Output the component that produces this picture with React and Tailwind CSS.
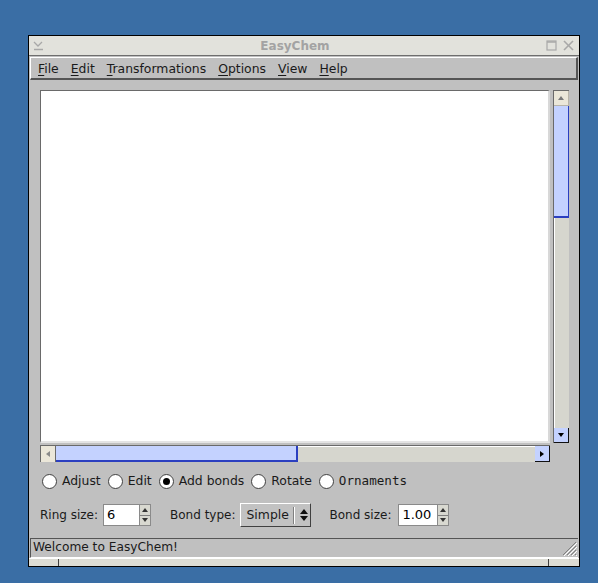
import React from "react";

const sans = { fontFamily: '"DejaVu Sans", "Liberation Sans", sans-serif' };

function Arrow({ dir, color = "#000" }) {
  const pts = {
    up: "1,5 4,1 7,5",
    down: "1,1 4,5 7,1",
    left: "5,1 1,4 5,7",
    right: "1,1 5,4 1,7",
  }[dir];
  const w = dir === "up" || dir === "down" ? 8 : 6;
  const h = dir === "up" || dir === "down" ? 6 : 8;
  return (
    <svg width={w} height={h} viewBox={`0 0 ${w} ${h}`}>
      <polygon points={pts} fill={color} />
    </svg>
  );
}

function Radio({ label, checked, mono }) {
  return (
    <div className="flex items-center gap-[5px]">
      <div className="w-[15px] h-[15px] rounded-full border border-[#404040] bg-white flex items-center justify-center">
        {checked && <div className="w-[7px] h-[7px] rounded-full bg-black" />}
      </div>
      <span
        className="text-[12.4px] text-[#1a1a1a]"
        style={mono ? { fontFamily: '"DejaVu Sans Mono", monospace', fontSize: "12.6px" } : undefined}
      >
        {label}
      </span>
    </div>
  );
}

function SpinBox({ value, width }) {
  return (
    <div className="flex h-[22px] border border-[#8a8a8a] bg-white">
      <div className={`${width} pl-[3px] flex items-center text-[13px] text-black`}>{value}</div>
      <div className="w-[11px] bg-[#c0c0c0] flex flex-col border-l border-[#8a8a8a]">
        <div className="flex-1 flex items-center justify-center border-b border-[#808080] bg-[#d8d8d0]">
          <svg width="6" height="4"><polygon points="0,4 3,0 6,4" fill="#333" /></svg>
        </div>
        <div className="flex-1 flex items-center justify-center bg-[#d8d8d0]">
          <svg width="6" height="4"><polygon points="0,0 3,4 6,0" fill="#333" /></svg>
        </div>
      </div>
    </div>
  );
}

export default function App() {
  const menu = ["File", "Edit", "Transformations", "Options", "View", "Help"];
  return (
    <div className="w-[598px] h-[583px] bg-[#3a6ea5] overflow-hidden pt-[35px] pl-[28px]" style={sans}>
      <div className="w-[552px] h-[532px] border border-black bg-[#c0c0c0] flex flex-col">
        {/* Title bar */}
        <div className="h-[20px] bg-[#e2e2dc] border-b border-[#6e6e6e] flex items-center relative">
          <svg className="absolute left-[4px] top-[5px]" width="11" height="10" viewBox="0 0 11 10">
            <polyline points="1,1 5,5 9,1" fill="none" stroke="#a8a8a8" strokeWidth="1.3" />
            <line x1="1" y1="8.5" x2="10" y2="8.5" stroke="#a8a8a8" strokeWidth="1.5" />
          </svg>
          <div className="flex-1 text-center text-[12px] font-bold text-[#a3a3a3] pr-[18px]">EasyChem</div>
          <svg className="absolute right-[22px] top-[4px]" width="11" height="11" viewBox="0 0 11 11">
            <rect x="1" y="1" width="9" height="9" fill="none" stroke="#a8a8a8" strokeWidth="1.2" />
            <line x1="1" y1="2" x2="10" y2="2" stroke="#a8a8a8" strokeWidth="1.5" />
          </svg>
          <svg className="absolute right-[5px] top-[4px]" width="11" height="11" viewBox="0 0 11 11">
            <line x1="1" y1="1" x2="10" y2="10" stroke="#a8a8a8" strokeWidth="1.6" />
            <line x1="10" y1="1" x2="1" y2="10" stroke="#a8a8a8" strokeWidth="1.6" />
          </svg>
        </div>

        {/* Menu bar */}
        <div className="px-[1px] pt-[1px]">
          <div className="h-[23px] pt-[2px] border-t border-l border-t-white border-l-white border-b-2 border-r-2 border-b-[#555] border-r-[#555] flex items-center pl-[7px] gap-[12px] text-[12.4px] text-[#1a1a1a]">
            {menu.map((m) => (
              <span key={m}>
                <span className="underline underline-offset-2">{m[0]}</span>
                {m.slice(1)}
              </span>
            ))}
          </div>
        </div>

        {/* Canvas + scrollbars */}
        <div className="pl-[11px] mt-[10px]">
          <div className="flex gap-[3px]">
            <div className="w-[510px] h-[353px] bg-white border-t border-l border-t-[#6a6a6a] border-l-[#6a6a6a] border-b-2 border-r-2 border-b-[#e4e4e4] border-r-[#d8d8d8]" />
            <div className="w-[16px] h-[353px] flex flex-col bg-[#d6d6ce] border-t border-l border-[#6a6a6a]">
              <div className="h-[15px] bg-[#ebe7d9] border-b border-r border-[#b8b4a8] flex items-center justify-center">
                <Arrow dir="up" color="#7a7a7a" />
              </div>
              <div className="h-[112px] bg-[#c4d2ff] border-b-2 border-r border-[#2b3fc0]" />
              <div className="flex-1 border-l border-white" />
              <div className="h-[15px] bg-[#c4d2ff] border-b border-r border-[#111] flex items-center justify-center">
                <Arrow dir="down" />
              </div>
            </div>
          </div>
          <div className="w-[510px] h-[17px] mt-[2px] flex bg-[#d6d6ce] border-t border-l border-[#6a6a6a]">
            <div className="w-[15px] bg-[#ebe7d9] border-r border-[#6a6a6a] flex items-center justify-center">
              <Arrow dir="left" color="#8a8a8a" />
            </div>
            <div className="w-[242px] bg-[#c4d2ff] border-b-2 border-r-2 border-[#2b3fc0]" />
            <div className="flex-1 border-t border-white" />
            <div className="w-[15px] bg-[#c4d2ff] border-b border-r border-[#111] flex items-center justify-center">
              <Arrow dir="right" />
            </div>
          </div>
        </div>

        {/* Mode radios */}
        <div className="flex items-center gap-[7px] pl-[13px] mt-[10px] h-[18px]">
          <Radio label="Adjust" />
          <Radio label="Edit" />
          <Radio label="Add bonds" checked />
          <Radio label="Rotate" />
          <Radio label="Ornaments" mono />
        </div>

        {/* Options row */}
        <div className="flex items-center pl-[11px] mt-[13px] h-[24px] text-[12px] text-[#1a1a1a]">
          <span>Ring size:</span>
          <div className="ml-[5px]">
            <SpinBox value="6" width="w-[35px]" />
          </div>
          <span className="ml-[19px]">Bond type:</span>
          <div className="ml-[4px] h-[24px] w-[71px] border border-t-white border-l-white border-b-[#404040] border-r-[#404040] bg-[#c2c2c2] flex items-center text-[12.4px]">
            <span className="pl-[6px]">Simple</span>
            <div className="ml-[4px] h-[17px] border-l border-r border-l-[#808080] border-r-white" />
            <svg className="ml-[5px]" width="8" height="12" viewBox="0 0 8 12">
              <polygon points="0,5 4,0 8,5" fill="#111" />
              <polygon points="0,7 4,12 8,7" fill="#111" />
            </svg>
          </div>
          <span className="ml-[19px]">Bond size:</span>
          <div className="ml-[7px]">
            <SpinBox value="1.00" width="w-[38px]" />
          </div>
        </div>

        {/* Status bar */}
        <div className="mt-[11px] mx-[1px] h-[20px] border-t border-l border-[#555] border-b border-b-white flex items-center relative">
          <span className="pl-[2px] pb-[1px] text-[12.2px] text-[#1a1a1a]">Welcome to EasyChem!</span>
          <svg className="absolute right-[1px] bottom-[1px]" width="15" height="15" viewBox="0 0 15 15">
            {[0, 4, 8, 12].map((o) => (
              <g key={o}>
                <line x1={15 - 1} y1={o + 1} x2={o + 1} y2={15 - 1} stroke="#808080" strokeWidth="1" />
                <line x1={15} y1={o + 2} x2={o + 2} y2={15} stroke="#ffffff" strokeWidth="1" />
              </g>
            ))}
          </svg>
        </div>

        {/* Bottom strip */}
        <div className="flex-1 flex bg-[#dcdcd4] border-t border-white">
          <div className="w-[30px] border-r border-[#404040]" />
          <div className="flex-1 border-r border-[#404040]" />
          <div className="w-[30px]" />
        </div>
      </div>
    </div>
  );
}
